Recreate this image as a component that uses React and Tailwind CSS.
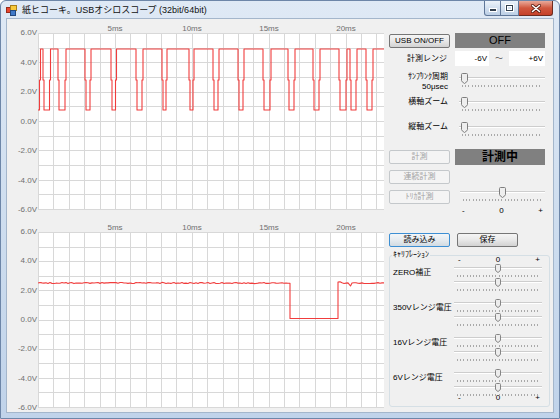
import React from 'react';

const FONT = "font-['Liberation_Sans','Noto_Sans_CJK_JP',sans-serif]";

const PX_MS = 15.38;
const PLOT_W = 346;

// top chart levels (plot space)
const HI = 16;
const LO = 77;
const MID = 47;
const LOWS = [
  [0, 1.5], [6, 11.5], [21, 27], [48, 52], [74, 77.5], [99, 104], [125, 128], [152, 155],
  [176, 180], [201, 205], [226, 232], [251, 256], [276, 281], [302, 308], [313, 318], [329, 334],
];

const noise = (i) => {
  const s = Math.sin(i * 12.9898) * 43758.5453;
  return s - Math.floor(s) - 0.5;
};

const flatSeg = (x0, x1, y, amp, seed) => {
  let d = '';
  for (let x = x0; x <= x1; x += 2) d += ` L${x} ${(y + noise(x + seed) * amp).toFixed(2)}`;
  return d;
};

const buildSquare = () => {
  let d = `M0 ${LO}`;
  LOWS.forEach(([a, b], i) => {
    if (i > 0) d += ` L${a - 1} ${HI} L${a - 1} ${MID} L${a} ${MID} L${a} ${LO}`;
    d += ` L${b} ${LO} L${b} ${MID} L${b + 1} ${MID} L${b + 1} ${HI}`;
  });
  return d + ` L${PLOT_W} ${HI}`;
};

const buildBottom = () =>
  'M0 51' +
  flatSeg(2, 252, 51, 1.2, 0) +
  ' L252 86.5 L300 86.5 L300 50 L302 49.8' +
  flatSeg(304, 310, 51, 1, 3) +
  ' L312.5 54 L314 51' +
  flatSeg(316, 346, 51, 1.2, 7);

const Y_LABELS = ['6.0V', '4.0V', '2.0V', '0.0V', '-2.0V', '-4.0V', '-6.0V'];
const X_LABELS = ['5ms', '10ms', '15ms', '20ms'];

// half-width voiced marks come out too wide in the fallback font, pull them in
const Dk = ({ children }) => <span className="mr-[-4px]">{children}</span>;

const Chart = ({ span, path, className = '' }) => {
  const vlines = Array.from({ length: 23 }, (_, i) => Math.round(i * PX_MS) + 0.5);
  const hlines = Array.from({ length: 13 }, (_, j) => Math.round((j * span) / 12) + 0.5);
  return (
    <div className={`flex flex-col ${className}`}>
      <div className="flex h-[14px] items-end pl-[31px]">
        <div className="flex w-[346px] gap-[77px] pl-[77px]">
          {X_LABELS.map((l) => (
            <div key={l} className="flex w-0 justify-center whitespace-nowrap text-[8px] leading-[9px] text-[#6f6f6f]">
              {l}
            </div>
          ))}
        </div>
      </div>
      <div className="flex">
        <div className="flex w-[31px] flex-col justify-between pr-[1px]" style={{ height: span + 1 }}>
          {Y_LABELS.map((l) => (
            <div key={l} className="flex h-0 items-center justify-end whitespace-nowrap text-[8px] text-[#6f6f6f]">
              {l}
            </div>
          ))}
        </div>
        <svg width={PLOT_W} height={span + 1} className="block bg-white">
          {vlines.map((x) => (
            <line key={`v${x}`} x1={x} x2={x} y1={0} y2={span + 1} stroke="#d8d8d8" shapeRendering="crispEdges" />
          ))}
          {hlines.map((y) => (
            <line key={`h${y}`} x1={0} x2={PLOT_W} y1={y} y2={y} stroke="#d8d8d8" shapeRendering="crispEdges" />
          ))}
          <path d={path} fill="none" stroke="#f03c3c" strokeWidth="1.1" strokeLinejoin="round" />
        </svg>
      </div>
    </div>
  );
};

const WinButton = ({ children, disabled, focused, className = '' }) => {
  let look = 'border-[#767676] bg-linear-to-b from-[#f5f5f5] via-[#e8e8e8] to-[#d2d2d2] text-black';
  if (disabled) look = 'border-[#c4c8cb] bg-[#f4f4f4] text-[#a2a2a2]';
  if (focused) look = 'border-[#3d8fd3] bg-linear-to-b from-[#f3f6f8] via-[#e6ebef] to-[#d2dbe2] text-black';
  return (
    <div className={`flex h-[14px] w-[61px] shrink-0 items-center justify-center whitespace-nowrap rounded-[2px] border text-[8px] leading-none ${look} ${className}`}>
      {children}
    </div>
  );
};

const Thumb = ({ small }) =>
  small ? (
    <svg width="6" height="9" viewBox="0 0 6 9" className="block">
      <path d="M0.5 1.5 Q0.5 0.5 1.5 0.5 H4.5 Q5.5 0.5 5.5 1.5 V6 Q5.5 7 3 8.5 Q0.5 7 0.5 6 Z" fill="#ededed" stroke="#858585" />
    </svg>
  ) : (
    <svg width="7" height="11" viewBox="0 0 7 11" className="block">
      <path d="M0.5 1.5 Q0.5 0.5 1.5 0.5 H5.5 Q6.5 0.5 6.5 1.5 V7.5 Q6.5 8.7 3.5 10.5 Q0.5 8.7 0.5 7.5 Z" fill="#eeeeee" stroke="#7e7e7e" />
    </svg>
  );

const Slider = ({ pos = 0, small, className = '' }) => {
  const tw = small ? 6 : 7;
  return (
    <div className={`relative flex h-[14px] flex-col ${className}`}>
      <div className="flex h-[10px] items-center">
        <div className="h-[2px] w-full border-b border-white bg-[#cdcdcd]" />
      </div>
      <div className="mx-[3px] mt-[2px] h-[2px] bg-[image:repeating-linear-gradient(90deg,#a9a9a9_0_1px,transparent_1px_3.2px)]" />
      <div className="absolute left-[2px] right-[2px] top-0 h-[10px]">
        <div
          className={small ? 'absolute top-[1px]' : 'absolute top-0'}
          style={{ left: `calc(${pos}% - ${(pos * tw) / 100}px)` }}
        >
          <Thumb small={small} />
        </div>
      </div>
    </div>
  );
};

const WindowIcon = () => (
  <svg width="11" height="11" viewBox="0 0 11 11" className="block">
    <rect x="0.5" y="2.5" width="5" height="5" fill="#e8462e" stroke="#9a2b1a" />
    <rect x="4.5" y="0.5" width="6" height="5" fill="#f7c93a" stroke="#a8801b" />
    <rect x="4.5" y="5.5" width="5" height="5" fill="#3f79c8" stroke="#23487e" />
  </svg>
);

const CaptionButtons = () => (
  <div className="mr-[6px] flex self-start">
    <div className="flex h-[15px] w-[17px] items-end justify-center rounded-bl-[3px] border border-t-0 border-[#5f7698] bg-linear-to-b from-[#edf3fa] via-[#d3e0ef] to-[#bccfe6] pb-[3px]">
      <svg width="8" height="4" className="block">
        <rect x="0.5" y="0.5" width="7" height="3" fill="#33404f" stroke="#ffffff" />
      </svg>
    </div>
    <div className="flex h-[15px] w-[18px] items-center justify-center border-b border-r border-[#5f7698] bg-linear-to-b from-[#edf3fa] via-[#d3e0ef] to-[#bccfe6]">
      <svg width="9" height="8" className="block">
        <rect x="0.5" y="0.5" width="8" height="7" fill="none" stroke="#ffffff" />
        <rect x="1.5" y="1.5" width="6" height="5" fill="none" stroke="#33404f" />
        <rect x="2.5" y="2.5" width="4" height="3" fill="none" stroke="#ffffff" />
      </svg>
    </div>
    <div className="flex h-[15px] w-[34px] items-center justify-center rounded-br-[3px] border-b border-r border-[#6e2b1f] bg-linear-to-b from-[#e8aa9b] via-[#d0573e] to-[#c5412a]">
      <svg width="10" height="9" className="block">
        <path d="M1.5 1.5 L8.5 7.5 M8.5 1.5 L1.5 7.5" stroke="#5a1d12" strokeWidth="3" strokeLinecap="round" />
        <path d="M1.5 1.5 L8.5 7.5 M8.5 1.5 L1.5 7.5" stroke="#ffffff" strokeWidth="1.6" strokeLinecap="round" />
      </svg>
    </div>
  </div>
);

const CAL_GROUPS = ['ZERO補正', '350Vレンジ電圧', '16Vレンジ電圧', '6Vレンジ電圧'];

const ControlPanel = () => (
  <div className="flex w-[166px] flex-col pl-[2px] text-[8px] leading-[10px] text-black">
    <div className="mt-[14px] flex h-[15px] items-center gap-[5px]">
      <WinButton>USB ON/OFF</WinButton>
      <div className="flex h-[15px] w-[90px] items-center justify-center bg-[#808080] text-[11px] leading-none">OFF</div>
    </div>

    <div className="mt-[3px] flex h-[15px] items-center">
      <div className="w-[61px] pr-[3px] text-right">計測レンジ</div>
      <div className="ml-[5px] flex h-[15px] w-[34px] items-center justify-end bg-white pr-[2px]">-6V</div>
      <div className="w-[20px] text-center text-[#555555]">～</div>
      <div className="flex h-[15px] w-[36px] items-center justify-end bg-white pr-[2px]">+6V</div>
    </div>

    <div className="mt-[6px] flex items-start">
      <div className="w-[61px] whitespace-nowrap pr-[2px] text-right">
        ｻﾝﾌ<Dk>ﾟ</Dk>ﾘﾝｸ<Dk>ﾞ</Dk>周期
        <br />
        50μsec
      </div>
      <Slider pos={0} className="ml-[9px] mt-[1px] w-[86px]" />
    </div>

    <div className="mt-[5px] flex items-start">
      <div className="w-[61px] pr-[2px] text-right">横軸ズーム</div>
      <Slider pos={0} className="ml-[9px] w-[86px]" />
    </div>

    <div className="mt-[11px] flex items-start">
      <div className="w-[61px] pr-[2px] text-right">縦軸ズーム</div>
      <Slider pos={0} className="ml-[9px] w-[86px]" />
    </div>

    <div className="mt-[13px] flex h-[16px] items-center gap-[5px]">
      <WinButton disabled>計測</WinButton>
      <div className="flex h-[16px] w-[90px] items-center justify-center bg-[#808080] text-[12px] font-bold leading-none">計測中</div>
    </div>

    <div className="mt-[5px] flex">
      <WinButton disabled>連続計測</WinButton>
    </div>

    <div className="mt-[3px] flex items-start">
      <WinButton disabled className="mt-[3px]">
        <span>ﾄﾘｶ<Dk>ﾞ</Dk>計測</span>
      </WinButton>
      <div className="ml-[10px] flex w-[85px] flex-col">
        <Slider pos={50} className="w-full" />
        <div className="mt-[5px] flex justify-between px-[2px]">
          <span>-</span>
          <span>0</span>
          <span>+</span>
        </div>
      </div>
    </div>

    <div className="mt-[17px] flex gap-[7px]">
      <WinButton focused>読み込み</WinButton>
      <WinButton>保存</WinButton>
    </div>

    <div className="relative mt-[8px] flex h-[152px] w-[161px] flex-col rounded-[3px] border border-[#d5dfe5] pl-[3px]">
      <span className="absolute left-[2px] top-[-6px] whitespace-nowrap bg-[#f0f0f0] px-[1px]">
        ｷｬﾘﾌ<Dk>ﾞ</Dk>ﾚｰｼｮﾝ
      </span>
      <div className="ml-[61px] flex h-[7px] w-[88px] justify-between pl-[4px] pr-[2px] leading-[7px]">
        <span>-</span>
        <span>0</span>
        <span>+</span>
      </div>
      {CAL_GROUPS.map((g, i) => (
        <div key={g} className={`flex items-start ${i > 0 ? 'mt-[7px]' : ''}`}>
          <div className="w-[61px] whitespace-nowrap pt-[5px]">{g}</div>
          <div className="flex w-[88px] flex-col">
            <Slider small pos={50} />
            <Slider small pos={50} />
          </div>
        </div>
      ))}
      <div className="ml-[61px] mt-[-2px] flex h-[7px] w-[88px] justify-between pl-[4px] pr-[2px] leading-[7px]">
        <span>-</span>
        <span>0</span>
        <span>+</span>
      </div>
    </div>
  </div>
);

export default function App() {
  const topPath = buildSquare();
  const bottomPath = buildBottom();

  return (
    <div className={`relative h-[419px] w-[560px] overflow-hidden rounded-t-[6px] border border-[#6d86a8] bg-linear-to-b from-[#dfe9f5] via-[#cfdeef] to-[#c0d3ea] ${FONT}`}>
      <div className="flex h-[18px] items-start justify-between">
        <div className="flex h-[18px] items-center gap-[5px] pl-[5px]">
          <WindowIcon />
          <span className="whitespace-nowrap text-[9px] leading-none text-[#111111]">紙ヒコーキ。USBオシロスコープ (32bit/64bit)</span>
        </div>
        <CaptionButtons />
      </div>

      <div className="ml-[6px] flex h-[393px] w-[546px] bg-[#f0f0f0] shadow-[0_0_0_1px_#a4b6cb]">
        <div className="flex w-[380px] flex-col">
          <Chart span={176} path={topPath} />
          <Chart span={175} path={bottomPath} className="mt-[8px]" />
        </div>
        <ControlPanel />
      </div>
    </div>
  );
}
